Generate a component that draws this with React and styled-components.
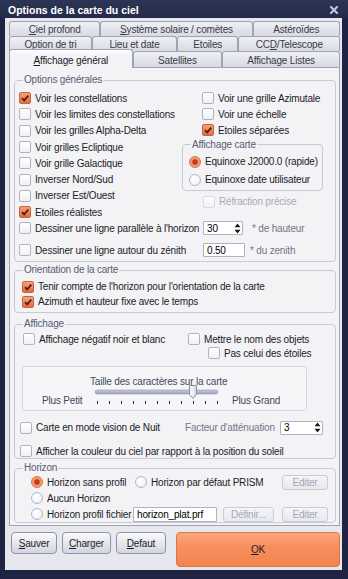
import React from 'react'
import styled, { createGlobalStyle } from 'styled-components'

const GlobalStyle = createGlobalStyle`
  html, body { margin: 0; padding: 0; background: #1d2340; }
  body {
    font-family: "Liberation Sans", Arial, sans-serif;
    font-size: 10px;
    letter-spacing: -0.18px;
    color: #1c1c26;
  }
  * { box-sizing: border-box; }
`

// ========== window frame ==============

const Window = styled.div`
  width: 348px;
  height: 579px;
  display: flex;
  flex-direction: column;
  background: #1e2442;
`

const TitleBar = styled.div`
  height: 18px;
  flex: none;
  display: flex;
  align-items: center;
  justify-content: space-between;
  padding: 1px 10px 0 8px;
  background: linear-gradient(#2d3556, #242b4a);
  color: #fff;
  font-weight: bold;
  font-size: 10.5px;
  letter-spacing: 0;
`

const Client = styled.div`
  flex: 1;
  margin: 0 6px 9px 5px;
  background: #e7e8ed;
  padding: 3px 2px 2px 4px;
  display: flex;
  flex-direction: column;
`

// ========== tabs ==============

const TabRow = styled.div`
  display: flex;
  align-items: flex-end;
  height: ${p => p.$h}px;
`

const Tab = styled.div`
  flex: ${p => p.$w} 1 0;
  min-width: 0;
  height: ${p => (p.$active ? p.$h + 3 : p.$h)}px;
  margin-bottom: ${p => (p.$active ? -1 : 0)}px;
  position: relative;
  z-index: ${p => (p.$active ? 1 : 0)};
  display: flex;
  align-items: center;
  justify-content: center;
  padding-top: ${p => p.$pt || 0}px;
  border: 1px solid #9ea3b9;
  border-bottom: none;
  border-radius: 3px 3px 0 0;
  background: ${p => (p.$active ? 'linear-gradient(#fdfdfe, #f3f3f6 40%)' : 'linear-gradient(#f0f0f4, #d8dae3)')};
  color: ${p => (p.$active ? '#1c1c26' : '#3a3a48')};
  white-space: nowrap;
`

const Panel = styled.div`
  background: #f3f3f6;
  border: 1px solid #9ea3b9;
  padding: 6px 3px 2px 4px;
  display: flex;
  flex-direction: column;
`

// ========== group boxes ==============

const Group = styled.fieldset`
  margin: ${p => p.$mt || 0}px 0 0;
  padding: 0;
  width: ${p => (p.$w ? `${p.$w}px` : 'auto')};
  border: 1px solid #c6c9d6;
  border-radius: 4px;
  min-inline-size: 0;
`

const Legend = styled.legend`
  margin-left: 8px;
  padding: 0 1px;
  line-height: 12px;
  color: #575c72;
`

const GroupBody = styled.div`
  padding: ${p => p.$p};
`

const Columns = styled.div`
  display: flex;
`

const Column = styled.div`
  width: ${p => (p.$w ? `${p.$w}px` : 'auto')};
  flex: ${p => (p.$w ? 'none' : 1)};
  display: flex;
  flex-direction: column;
`

const ValueGrid = styled.div`
  display: grid;
  grid-template-columns: ${p => p.$cols};
  grid-auto-rows: ${p => p.$row || 16}px;
  row-gap: ${p => p.$gap || 0}px;
  margin-top: ${p => p.$mt || 0}px;
  align-items: center;
`

// ========== controls ==============

const Row = styled.label`
  display: flex;
  align-items: center;
  gap: 4px;
  height: ${p => p.$h || 16}px;
  padding-left: ${p => p.$indent || 0}px;
  margin-top: ${p => p.$mt || 0}px;
  color: ${p => (p.$disabled ? '#a9aab4' : 'inherit')};
  white-space: nowrap;
  grid-column: ${p => p.$span || 'auto'};
`

const Box = styled.span`
  width: 12px;
  height: 12px;
  flex: none;
  display: flex;
  align-items: center;
  justify-content: center;
  border-radius: 2px;
  border: 1px solid ${p => (p.$on ? '#c8653c' : p.$disabled ? '#d6d8e0' : '#afb3c3')};
  background: ${p => (p.$on ? 'linear-gradient(#f5a07a, #e46b40)' : 'linear-gradient(#ffffff, #f0f1f5)')};
`

const Dot = styled.span`
  width: 12px;
  height: 12px;
  flex: none;
  border-radius: 50%;
  border: 1px solid ${p => (p.$on ? '#d27249' : '#b3b7c8')};
  background: ${p => (p.$on
    ? 'radial-gradient(circle, #c13d18 0 2.3px, #f29265 3.2px, #f7ad88)'
    : 'radial-gradient(circle at 40% 35%, #ffffff, #eceef3)')};
`

const Tick = () => (
  <svg width="10" height="10" viewBox="0 0 10 10">
    <path d="M2 5.2 L4.2 7.4 L8.3 2.6" fill="none" stroke="#4d200c" strokeWidth="1.7" />
  </svg>
)

const Check = ({ on, disabled, children, ...rest }) => (
  <Row $disabled={disabled} {...rest}>
    <Box $on={on} $disabled={disabled}>{on && <Tick />}</Box>
    {children}
  </Row>
)

const Radio = ({ on, children, ...rest }) => (
  <Row {...rest}>
    <Dot $on={on} />
    {children}
  </Row>
)

const Field = styled.div`
  width: ${p => p.$w}px;
  height: ${p => p.$h || 14}px;
  display: flex;
  align-items: center;
  justify-content: space-between;
  padding: 0 1px 0 3px;
  background: #fff;
  border: 1px solid #adb2c5;
  border-radius: 1px;
  color: #000;
`

const Spin = ({ value, w }) => (
  <Field $w={w}>
    <span>{value}</span>
    <svg width="7" height="11" viewBox="0 0 7 11">
      <path d="M3.5 0.5 L6.5 4.3 H0.5 Z M3.5 10.5 L6.5 6.7 H0.5 Z" fill="#1a1a1a" />
    </svg>
  </Field>
)

const Note = styled.span`
  color: #747688;
  padding-left: ${p => p.$pl || 0}px;
  white-space: nowrap;
`

const SmallButton = styled.div`
  width: ${p => p.$w}px;
  height: 15px;
  display: flex;
  align-items: center;
  justify-content: center;
  border: 1px solid #c9ccd7;
  border-radius: 3px;
  background: linear-gradient(#f6f6f9, #e7e8ee);
  color: #a6a8b3;
`

// ========== slider ==============

const SliderBox = styled.div`
  margin: 6px 0 0 2px;
  width: 285px;
  height: 45px;
  padding: 9px 0 0 19px;
  border: 1px solid #d6d8e1;
  border-radius: 3px;
  background: #f6f6f9;
  color: #454858;
`

const Caption = styled.div`
  padding-left: 48px;
  line-height: 11px;
  white-space: nowrap;
`

const SliderLine = styled.div`
  display: grid;
  grid-template-columns: 52px 125px auto;
  align-items: end;
  margin-top: -3px;
  white-space: nowrap;
`

const SliderLabel = styled.span`
  line-height: 12px;
  padding-left: ${p => p.$pl || 0}px;
  margin-bottom: -1px;
`

const Slider = ({ value }) => {
  const ticks = Array.from({ length: 11 }, (_, i) => 3 + i * 12)
  const x = 3 + value * 12
  return (
    <svg width="125" height="22" viewBox="0 0 125 22">
      <defs>
        <linearGradient id="track" x1="0" y1="0" x2="0" y2="1">
          <stop offset="0" stopColor="#c7cadc" />
          <stop offset="1" stopColor="#9ca1bb" />
        </linearGradient>
        <linearGradient id="thumb" x1="0" y1="0" x2="1" y2="0">
          <stop offset="0" stopColor="#ffffff" />
          <stop offset="1" stopColor="#d3d6e2" />
        </linearGradient>
      </defs>
      <rect x="1" y="6" width="123" height="4" rx="2" fill="url(#track)" stroke="#9398b2" strokeWidth="0.6" />
      {ticks.map(t => (
        <line key={t} x1={t + 0.5} y1="17" x2={t + 0.5} y2="20" stroke="#2a2a2a" strokeWidth="1" />
      ))}
      <path
        d={`M${x - 3.5} 1.5 h7 v9 l-3.5 3.8 l-3.5 -3.8 z`}
        fill="url(#thumb)"
        stroke="#868ca8"
        strokeWidth="1"
        strokeLinejoin="round"
      />
    </svg>
  )
}

// ========== footer buttons ==============

const Footer = styled.div`
  display: flex;
  align-items: flex-start;
  gap: 5px;
  margin-top: 6px;
  padding-left: 2px;
`

const Button = styled.button`
  width: ${p => p.$w}px;
  height: 22px;
  padding: 0;
  font: inherit;
  letter-spacing: inherit;
  color: #1c1c26;
  border: 1px solid #8d92aa;
  border-radius: 4px;
  background: linear-gradient(#fbfbfd, #e4e5ec 55%, #d3d5df);
`

const OkButton = styled(Button)`
  flex: 1;
  height: 35px;
  margin-left: 5px;
  border-color: #d9764e;
  background: linear-gradient(#fba679, #f78e5b 45%, #f3844f);
`

const CloseIcon = () => (
  <svg width="8" height="8" viewBox="0 0 8 8">
    <path d="M1 1 L7 7 M7 1 L1 7" stroke="#c6cbd9" strokeWidth="2" strokeLinecap="square" />
  </svg>
)

const tabRows = [
  { h: 15, tabs: [[91, <><u>C</u>iel profond</>], [153, <><u>S</u>ystème solaire / comètes</>], [87, 'Astéroïdes']] },
  { h: 15, tabs: [[83, <><u>O</u>ption de tri</>], [85, <><u>L</u>ieu et date</>], [61, 'Etoiles'], [102, <>CC<u>D</u>/Telescope</>]] },
  { h: 16, pt: 2, tabs: [[124, <><u>A</u>ffichage général</>, true], [89, 'Satellites'], [118, 'Affichage Listes']] },
]

const leftChecks = [
  ['Voir les constellations', true],
  ['Voir les limites des constellations'],
  ['Voir les grilles Alpha-Delta'],
  ['Voir grilles Ecliptique'],
  ['Voir grille Galactique'],
  ['Inverser Nord/Sud'],
  ['Inverser Est/Ouest'],
  ['Etoiles réalistes', true],
]

export default function App() {
  return (
    <Window>
      <GlobalStyle />
      <TitleBar>
        <span>Options de la carte du ciel</span>
        <CloseIcon />
      </TitleBar>
      <Client>
        {tabRows.map((row, i) => (
          <TabRow key={i} $h={row.h}>
            {row.tabs.map(([w, label, active], j) => (
              <Tab key={j} $w={w} $h={row.h} $pt={row.pt} $active={active}>{label}</Tab>
            ))}
          </TabRow>
        ))}
        <Panel>
          <Group>
            <Legend>Options générales</Legend>
            <GroupBody $p="4px 5px 3px 4px">
              <Columns>
                <Column $w={163}>
                  {leftChecks.map(([label, on]) => (
                    <Check key={label} on={on} $h={16.3}>{label}</Check>
                  ))}
                </Column>
                <Column>
                  <Check $indent={20} $h={16.2}>Voir une grille Azimutale</Check>
                  <Check $indent={20} $h={16.2}>Voir une échelle</Check>
                  <Check on $indent={20} $h={16.2}>Etoiles séparées</Check>
                  <Group $w={141} $mt={0}>
                    <Legend>Affichage carte</Legend>
                    <GroupBody $p="2px 0 1px 6px">
                      <Radio on $h={18}>Equinoxe J2000.0 (rapide)</Radio>
                      <Radio $h={18}>Equinoxe date utilisateur</Radio>
                    </GroupBody>
                  </Group>
                  <Check disabled $indent={21} $mt={3}>Réfraction précise</Check>
                </Column>
              </Columns>
              <ValueGrid $cols="184px 41px auto" $gap={6}>
                <Check>Dessiner une ligne parallèle à l'horizon</Check>
                <Spin value="30" w={40} />
                <Note $pl={8}>* de hauteur</Note>
                <Check>Dessiner une ligne autour du zénith</Check>
                <Field $w={42}>0.50</Field>
                <Note $pl={6}>* du zenith</Note>
              </ValueGrid>
            </GroupBody>
          </Group>

          <Group $mt={2}>
            <Legend>Orientation de la carte</Legend>
            <GroupBody $p="3px 4px 3px 7px">
              <Check on $h={15}>Tenir compte de l'horizon pour l'orientation de la carte</Check>
              <Check on $h={15}>Azimuth et hauteur fixe avec le temps</Check>
            </GroupBody>
          </Group>

          <Group $mt={5}>
            <Legend>Affichage</Legend>
            <GroupBody $p="2px 6px 0 5px">
              <ValueGrid $cols="168px auto" $row={14}>
                <Check $indent={3} $h={14}>Affichage négatif noir et blanc</Check>
                <Check $h={14}>Mettre le nom des objets</Check>
              </ValueGrid>
              <Check $indent={188} $h={14}>Pas celui des étoiles</Check>
              <SliderBox>
                <Caption>Taille des caractères sur la carte</Caption>
                <SliderLine>
                  <SliderLabel>Plus Petit</SliderLabel>
                  <Slider value={8} />
                  <SliderLabel $pl={13}>Plus Grand</SliderLabel>
                </SliderLine>
              </SliderBox>
              <ValueGrid $cols="165px 95px 43px" $row={17} $mt={8}>
                <Check $h={17}>Carte en mode vision de Nuit</Check>
                <Note>Facteur d'atténuation</Note>
                <Spin value="3" w={43} />
              </ValueGrid>
              <Check $mt={8} $h={14}>Afficher la couleur du ciel par rapport à la position du soleil</Check>
            </GroupBody>
          </Group>

          <Group $mt={3}>
            <Legend>Horizon</Legend>
            <GroupBody $p="0 0 0 16px">
              <ValueGrid $cols="102px 90px 59px 46px">
                <Radio on>Horizon sans profil</Radio>
                <Radio $indent={2} $span="span 2">Horizon par défaut PRISM</Radio>
                <SmallButton $w={46}>Editer</SmallButton>
                <Radio $span="span 4">Aucun Horizon</Radio>
                <Radio>Horizon profil fichier</Radio>
                <Field $w={84} $h={15}>horizon_plat.prf</Field>
                <SmallButton $w={51}>Définir...</SmallButton>
                <SmallButton $w={46}>Editer</SmallButton>
              </ValueGrid>
            </GroupBody>
          </Group>
        </Panel>

        <Footer>
          <Button $w={46}><u>S</u>auver</Button>
          <Button $w={49}><u>C</u>harger</Button>
          <Button $w={50}><u>D</u>efaut</Button>
          <OkButton><u>O</u>K</OkButton>
        </Footer>
      </Client>
    </Window>
  )
}
